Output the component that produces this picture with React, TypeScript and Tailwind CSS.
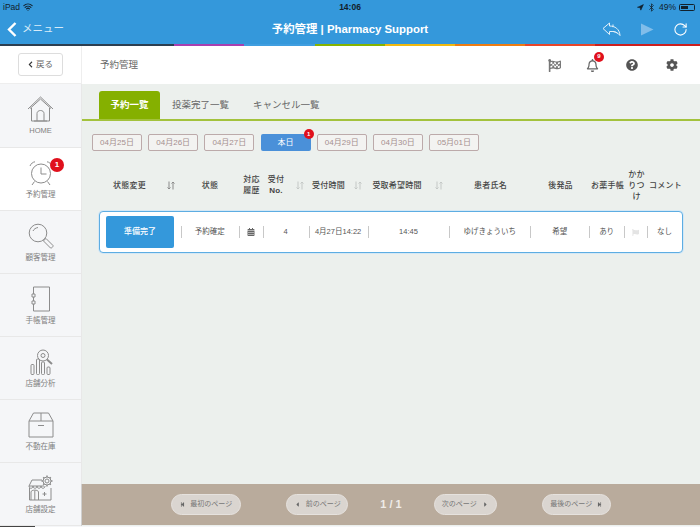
import { FaCalendarAlt, FaCog, FaFlag, FaFlagCheckered, FaQuestionCircle, FaRegBell, FaCaretLeft, FaCaretRight, FaStepBackward, FaStepForward, FaChevronLeft } from "react-icons/fa";
import { RotateCw, Wifi, Navigation, Bluetooth } from "lucide-react";
import type { ReactNode } from "react";

const strip = [
  "w-[174px] bg-[#2c3e50]",
  "w-[70px] bg-[#a83fb0]",
  "w-[71px] bg-[#3f9ee0]",
  "w-[70px] bg-[#86b300]",
  "w-[70px] bg-[#f1b90f]",
  "w-[70px] bg-[#ee7c12]",
  "w-[70px] bg-[#e8452a]",
  "w-[105px] bg-[#cc1f1f]",
];

function Sort({ dark }: { dark?: boolean }) {
  const c = dark ? "#8a8a8a" : "#c4c8c6";
  return (
    <svg width="8" height="9" viewBox="0 0 8 9" fill="none" stroke={c} strokeWidth="1">
      <path d="M2 0.5V8M0.5 6.5L2 8L3.5 6.5" />
      <path d="M6 8.5V1M4.5 2.5L6 1L7.5 2.5" />
    </svg>
  );
}

function NavItem({ icon, label, active, badge, first }: { icon: ReactNode; label: string; active?: boolean; badge?: boolean; first?: boolean }) {
  return (
    <div className={`relative flex flex-col items-center border-b border-[#e8e8e8] pt-[12px] ${first ? "h-[64px]" : "h-[63px]"} ${active ? "bg-white" : "bg-[#f5f6f8]"}`}>
      <div className="flex h-[26px] w-[30px] items-center justify-center">{icon}</div>
      <div className="mt-[3px] text-[7.5px] leading-[12px] text-[#808080]">{label}</div>
      {badge && (
        <div className="absolute left-[50px] top-[10px] flex h-[14px] w-[14px] items-center justify-center rounded-full bg-[#e0101c] text-[8px] font-bold text-white">1</div>
      )}
    </div>
  );
}

const ic = { fill: "none", stroke: "#8c8c8c", strokeWidth: 1 };

const HomeIcon = (
  <svg width="27" height="26" viewBox="0 0 27 26" {...ic}>
    <path d="M1 13L13.5 1L26 13" />
    <path d="M3 12.5L13.5 3L24 12.5" />
    <path d="M4.5 12V25H22.5V12" />
    <path d="M10 25V17.5C10 13.5 17 13.5 17 17.5V25" />
    <path d="M7 25H20" />
  </svg>
);
const ClockIcon = (
  <svg width="26" height="26" viewBox="0 0 26 26" {...ic}>
    <circle cx="13" cy="13.5" r="9.5" />
    <path d="M13 7.5V14H18.5" />
    <path d="M2 6C3 3.5 5 2 7 1.8M24 6C23 3.5 21 2 19 1.8" />
    <path d="M6.5 21.5L4 25M19.5 21.5L22 25" />
  </svg>
);
const SearchIcon = (
  <svg width="26" height="26" viewBox="0 0 26 26" {...ic}>
    <circle cx="10" cy="10" r="8.8" />
    <path d="M5 8C6 6 7.5 5 10 4.5" />
    <path d="M16.5 16.5L18 15.5L25 22.5C25.5 23.5 23.5 25.5 22.5 25L15.5 18Z" />
  </svg>
);
const BookIcon = (
  <svg width="20" height="26" viewBox="0 0 20 26" {...ic}>
    <path d="M2.5 1H18.5V25H2.5V18M2.5 15V11M2.5 8V1" />
    <path d="M1 8H4V11H1ZM1 15H4V18H1Z" />
  </svg>
);
const AnalysisIcon = (
  <svg width="24" height="26" viewBox="0 0 24 26" {...ic}>
    <rect x="2" y="15.5" width="3" height="10" rx="1" />
    <rect x="7.5" y="10" width="3" height="15.5" rx="1" />
    <rect x="12.5" y="13" width="3" height="12.5" rx="1" />
    <rect x="18" y="18" width="3" height="7.5" rx="1" />
    <circle cx="14" cy="6.5" r="5.5" />
    <circle cx="14" cy="6.5" r="2" />
    <path d="M18 10.5L23 15" strokeWidth="2" />
  </svg>
);
const BoxIcon = (
  <svg width="26" height="26" viewBox="0 0 26 26" {...ic}>
    <path d="M1 9V25H25V9L20.5 1H5.5Z" />
    <path d="M1 9H25M13 1V9M10 13.5H16" />
  </svg>
);
const ShopIcon = (
  <svg width="26" height="26" viewBox="0 0 26 26" {...ic}>
    <path d="M4 5H14M4 5L1 11H16" />
    <path d="M1 11C1 14 5 14 5 11C5 14 9 14 9 11C9 14 13 14 13 11C13 14 17 14 17 11" />
    <path d="M1.5 13V25H23V13" />
    <path d="M3 25V17C3 14.5 10.5 14.5 10.5 17V25M6.8 15.5V25" />
    <path d="M14.5 19H18.5M16.5 17V21" />
    <circle cx="19" cy="6" r="2" />
    <circle cx="19" cy="6" r="4" />
    <path d="M19 0.5V2M19 10V11.5M13.5 6H15M23 6H24.5M15.2 2.2L16.2 3.2M21.8 8.8L22.8 9.8M22.8 2.2L21.8 3.2M16.2 8.8L15.2 9.8" strokeWidth="1.4" />
  </svg>
);

const dates = ["04月25日", "04月26日", "04月27日", "本日", "04月29日", "04月30日", "05月01日"];

function Sep() {
  return <div className="absolute right-[-1px] top-[14px] h-[12px] w-px bg-[#c8c8c8]" />;
}
function Cell({ w, children }: { w: string; children: ReactNode }) {
  return (
    <div className={`relative flex h-full items-center justify-center ${w}`}>
      {children}
      <Sep />
    </div>
  );
}

function Pager({ children, w }: { children: ReactNode; w: string }) {
  return (
    <div className={`flex h-[21px] items-center justify-center gap-[5px] rounded-full border border-[#e6e2de] bg-[#dad5d0] text-[7px] text-[#777] ${w}`}>
      {children}
    </div>
  );
}

function Head({ w, children }: { w: string; children: ReactNode }) {
  return <div className={`flex items-center justify-center text-center ${w}`}>{children}</div>;
}

export default function App() {
  return (
    <div className="flex h-[527px] w-[700px] flex-col overflow-hidden bg-white font-['Liberation_Sans','Noto_Sans_CJK_JP',sans-serif]">
      <header className="relative h-[46px] shrink-0 bg-[#3498db] text-white">
        <div className="flex h-[14px] items-center justify-between px-[3px] text-[8.5px] text-[#12212c]">
          <div className="flex items-center gap-[3px]">
            <span>iPad</span>
            <Wifi size={10} strokeWidth={2.5} />
          </div>
          <span className="absolute left-0 right-0 top-[1px] text-center font-bold leading-[12px]">14:06</span>
          <div className="flex items-center gap-[3px] pr-[2px]">
            <Navigation size={7} fill="#12212c" />
            <Bluetooth size={9} />
            <span className="font-medium">49%</span>
            <div className="flex h-[7px] w-[16px] rounded-[1.5px] border border-[#12212c] p-px">
              <div className="h-full w-[7px] bg-[#12212c]" />
            </div>
          </div>
        </div>
        <div className="flex h-[30px] items-center justify-between pl-[7px] pr-[12px]">
          <div className="flex items-center gap-[5px]">
            <svg width="10" height="15" viewBox="0 0 10 15" fill="none" stroke="white" strokeWidth="2.4">
              <path d="M8.5 1L2 7.5L8.5 14" />
            </svg>
            <span className="text-[10.5px] text-[#d7ebf8]">メニュー</span>
          </div>
          <div className="flex items-center gap-[19px]">
            <svg width="19" height="14" viewBox="0 0 19 14" fill="none" stroke="#e4f1fa" strokeWidth="1">
              <path d="M1 6.5L7.5 1V4C13 4 17.5 7 18 13.5C16 10.5 12.5 9 7.5 9.5V12.5Z" />
              <path d="M11 2.5V5.2M11 9.4C13 9.7 14.5 10.5 15.5 11.5" />
            </svg>
            <svg width="14" height="13" viewBox="0 0 14 13"><path d="M1 0.5L13.5 6.5L1 12.5Z" fill="#80bdea" /></svg>
            <RotateCw size={15} strokeWidth={1.7} color="white" />
          </div>
        </div>
        <div className="absolute left-0 right-0 top-[22px] text-center text-[11.4px] font-bold leading-[14px]">予約管理 | Pharmacy Support</div>
        <div className="absolute bottom-0 left-0 flex h-[2px] w-full">
          {strip.map((c) => (
            <div key={c} className={c} />
          ))}
        </div>
      </header>

      <div className="flex h-[38px] shrink-0 bg-white">
        <div className="flex w-[82px] items-center justify-center border-b border-r border-[#eeeeee] pr-[1px]">
          <div className="flex h-[23px] w-[45px] items-center justify-center gap-[2px] rounded-[3px] border border-[#dddddd] text-[8.5px] text-[#666]">
            <FaChevronLeft size={7} color="#333" />
            <span>戻る</span>
          </div>
        </div>
        <div className="flex flex-1 items-center justify-between pl-[18px] pr-[22px]">
          <span className="text-[9.5px] text-[#666]">予約管理</span>
          <div className="flex items-center">
            <FaFlagCheckered size={13} color="#777" />
            <div className="relative ml-[25px]">
              <FaRegBell size={13} color="#666" />
              <div className="absolute left-[8px] top-[-7px] flex h-[10px] w-[10px] items-center justify-center rounded-full bg-[#e0101c] text-[6px] font-bold text-white">9</div>
            </div>
            <FaQuestionCircle size={12} color="#555" className="ml-[27px]" />
            <FaCog size={12} color="#555" className="ml-[28px]" />
          </div>
        </div>
      </div>

      <div className="flex min-h-0 flex-1">
        <aside className="relative w-[82px] shrink-0 border-r border-[#e8e8e8]">
          <NavItem icon={HomeIcon} label="HOME" first />
          <NavItem icon={ClockIcon} label="予約管理" active badge />
          <NavItem icon={SearchIcon} label="顧客管理" />
          <NavItem icon={BookIcon} label="手帳管理" />
          <NavItem icon={AnalysisIcon} label="店舗分析" />
          <NavItem icon={BoxIcon} label="不動在庫" />
          <NavItem icon={ShopIcon} label="店舗設定" />
          <div className="absolute bottom-0 right-[-1px] h-[42px] w-px bg-[#cfcfcf]" />
        </aside>

        <main className="flex min-w-0 flex-1 flex-col bg-[#ecf0ed]">
          <div className="flex-1">
            <div className="mt-[8px] flex h-[29px] items-end border-b-2 border-[#a3c23c] pl-[17px]">
              <div className="flex h-[28px] w-[61px] items-center justify-center rounded-t-[3px] bg-[#85b000] text-[9.5px] font-bold text-white">予約一覧</div>
              <div className="ml-[12px] flex h-[28px] items-center text-[9.5px] text-[#666]">投薬完了一覧</div>
              <div className="ml-[24px] flex h-[28px] items-center text-[9.5px] text-[#666]">キャンセル一覧</div>
            </div>

            <div className="ml-[10px] mt-[13px] flex gap-[6.2px]">
              {dates.map((d) =>
                d === "本日" ? (
                  <div key={d} className="relative flex h-[17px] w-[50px] items-center justify-center rounded-[2px] bg-[#4a90d9] text-[8px] text-white">
                    {d}
                    <div className="absolute right-[-3px] top-[-5px] flex h-[10px] w-[10px] items-center justify-center rounded-full bg-[#e0101c] text-[6px] font-bold text-white">1</div>
                  </div>
                ) : (
                  <div key={d} className="flex h-[17px] w-[50px] items-center justify-center rounded-[2px] border border-[#bcaaaa] bg-[#f3f3f1] text-[8px] text-[#a58f8f]">{d}</div>
                ),
              )}
            </div>

            <div className="ml-[24px] mt-[14px] flex h-[40px] items-center text-[8px] font-medium leading-[11px] tracking-[0.2px] text-[#444]">
              <Head w="w-[47px]">状態変更</Head>
              <Head w="w-[28px] pl-[8px]"><Sort dark /></Head>
              <Head w="w-[58px]">状態</Head>
              <Head w="w-[25px]">対応<br />履歴</Head>
              <Head w="w-[24px]"><span>受付<br /><span className="font-bold">No.</span></span></Head>
              <Head w="w-[21px] pl-[2px]"><Sort /></Head>
              <Head w="w-[39px]">受付時間</Head>
              <Head w="w-[20px]"><Sort /></Head>
              <Head w="w-[58px]">受取希望時間</Head>
              <Head w="w-[24px] pl-[2px]"><Sort /></Head>
              <Head w="w-[81px]">患者氏名</Head>
              <Head w="w-[59px]">後発品</Head>
              <Head w="w-[35px]">お薬手帳</Head>
              <Head w="w-[23px]">かか<br />りつ<br />け</Head>
              <Head w="w-[35px]">コメント</Head>
            </div>

            <div className="ml-[17px] mt-[6px] flex h-[42px] w-[584px] items-center rounded-[4px] border border-[#5dade2] bg-white pl-[6px] text-[7.5px] text-[#555] shadow-[0_0_0_1px_#d4e8f5]">
              <div className="relative flex h-full w-[75px] items-center">
                <div className="flex h-[32px] w-[68px] items-center justify-center rounded-[2px] bg-[#3498db] text-[8px] font-medium text-white">準備完了</div>
                <Sep />
              </div>
              <Cell w="w-[58px]">予約確定</Cell>
              <Cell w="w-[24px]"><FaCalendarAlt size={8} color="#666" /></Cell>
              <Cell w="w-[46px]">4</Cell>
              <Cell w="w-[59px]">4月27日14:22</Cell>
              <Cell w="w-[82px]">14:45</Cell>
              <Cell w="w-[81px]">ゆげきょういち</Cell>
              <Cell w="w-[59px]">希望</Cell>
              <Cell w="w-[35px]">あり</Cell>
              <Cell w="w-[23px]"><FaFlag size={7} color="#e4e4e4" /></Cell>
              <div className="flex h-full w-[35px] items-center justify-center">なし</div>
            </div>
          </div>

          <footer className="mb-px flex h-[41px] shrink-0 items-center justify-center gap-[45px] bg-[#b9ab9c]">
            <Pager w="w-[70px]"><FaStepBackward size={5} color="#666" /><span>最初のページ</span></Pager>
            <div className="flex items-center gap-[32px]">
              <Pager w="w-[62px]"><FaCaretLeft size={7} color="#666" /><span>前のページ</span></Pager>
              <span className="text-[11px] font-bold text-[#f0ece8]">1 / 1</span>
              <Pager w="w-[63px]"><span>次のページ</span><FaCaretRight size={7} color="#666" /></Pager>
            </div>
            <Pager w="w-[69px]"><span>最後のページ</span><FaStepForward size={5} color="#666" /></Pager>
          </footer>
        </main>
      </div>
      <div className="flex h-px shrink-0 items-end bg-[#f5f6f8]">
        <div className="h-px w-[35px] bg-[#444]" />
      </div>
    </div>
  );
}
